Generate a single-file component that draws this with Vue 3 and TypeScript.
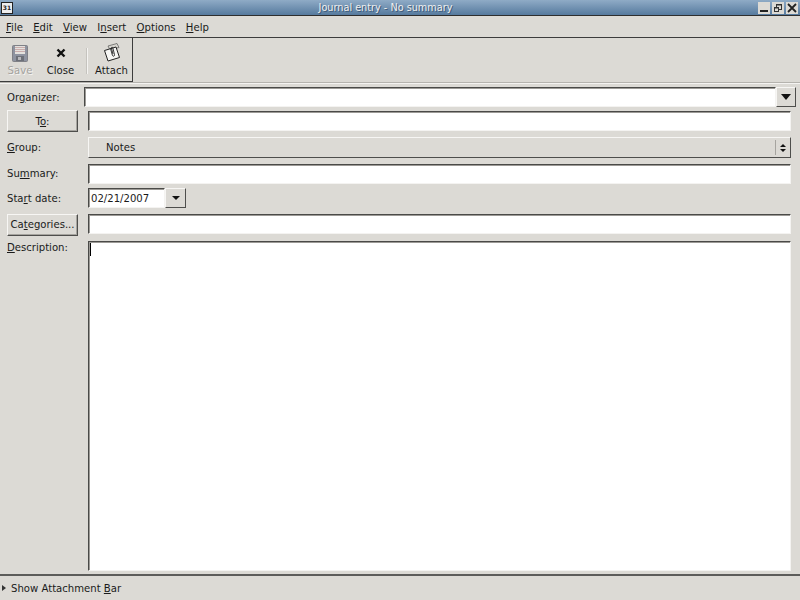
<script setup lang="ts">
const menus = [
  { before: '', key: 'F', after: 'ile' },
  { before: '', key: 'E', after: 'dit' },
  { before: '', key: 'V', after: 'iew' },
  { before: 'I', key: 'n', after: 'sert' },
  { before: '', key: 'O', after: 'ptions' },
  { before: '', key: 'H', after: 'elp' },
]
</script>

<template>
  <div class="window">
    <header class="titlebar">
      <div class="app-icon">31</div>
      <div class="title">Journal entry - No summary</div>
      <div class="win-buttons">
        <div class="win-btn">
          <svg width="12" height="12" viewBox="0 0 12 12"><rect x="2" y="8" width="8" height="2" fill="#222" /></svg>
        </div>
        <div class="win-btn">
          <svg width="12" height="12" viewBox="0 0 12 12" fill="none" stroke="#333">
            <rect x="4.5" y="2.5" width="5" height="5" />
            <path d="M4 3h6" />
            <rect x="2.5" y="5.5" width="4" height="4" fill="#dcdad5" />
            <path d="M2 6h5" />
          </svg>
        </div>
        <div class="win-btn">
          <svg width="12" height="12" viewBox="0 0 12 12" fill="none" stroke="#222" stroke-width="1.8"><path d="M2 2l8 8M10 2l-8 8" /></svg>
        </div>
      </div>
    </header>

    <nav class="menubar">
      <span v-for="m in menus" :key="m.key" class="menu">{{ m.before }}<u>{{ m.key }}</u>{{ m.after }}</span>
    </nav>

    <div class="toolbar-row">
      <div class="toolbar">
        <div class="tool disabled">
          <svg width="20" height="20" viewBox="0 -1 20 20">
            <rect x="2.500" y="1.500" width="15" height="16" rx="1" fill="#8e93a0" stroke="#808187" />
            <rect x="5" y="2" width="10" height="8" fill="#e4e2de" />
            <path d="M5 3.500h10M5 5.500h10M5 7.500h10" stroke="#c9adad" />
            <rect x="6" y="12" width="8" height="5" fill="#6d7078" />
            <rect x="8" y="13" width="3" height="3" fill="#b8b8bc" />
          </svg>
          <span class="tool-label">Save</span>
        </div>
        <div class="tool close">
          <svg width="20" height="20" viewBox="0 0 20 20" fill="none" stroke="#111" stroke-width="2.400"><path d="M6.500 6.500l7 7M13.500 6.500l-7 7" /></svg>
          <span class="tool-label">Close</span>
        </div>
        <div class="tool-sep"></div>
        <div class="tool attach">
          <svg width="20" height="20" viewBox="0 0 20 20">
            <path d="M6 3l9-2.500 2 4-9 2.500z" fill="#d8d6d0" stroke="#555" stroke-width=".7" />
            <path d="M2.500 7.500l11.500-3.500 3.500 10.500-11.500 3.500z" fill="#f6f6f4" stroke="#222" />
            <path d="M8.500 5.500l1.900 6.800c.4 1.500 2.500 1 2.100-.6L10.800 4.800c-.3-1-1.600-.6-1.400.4l1.600 5.800" fill="none" stroke="#222" stroke-width=".9" />
          </svg>
          <span class="tool-label">Attach</span>
        </div>
      </div>
    </div>

    <main class="form">
      <label class="label">Or<u>g</u>anizer:</label>
      <div class="combo">
        <div class="entry"></div>
        <div class="arrow-btn organizer-arrow"><i class="tri big"></i></div>
      </div>

      <button class="btn to-btn">T<u>o</u>:</button>
      <div class="entry field to-field"></div>

      <label class="label"><u>G</u>roup:</label>
      <div class="select">
        <span>Notes</span>
        <div class="select-arrows"><i class="tri up"></i><i class="tri"></i></div>
      </div>

      <label class="label summary-label">Su<u>m</u>mary:</label>
      <div class="entry field"></div>

      <label class="label">Sta<u>r</u>t date:</label>
      <div class="date">
        <div class="entry date-entry">02/21/2007</div>
        <div class="arrow-btn date-arrow"><i class="tri"></i></div>
      </div>

      <button class="btn cat-btn">Ca<u>t</u>egories...</button>
      <div class="entry field"></div>

      <label class="label desc-label"><u>D</u>escription:</label>
      <div class="entry description"><i class="caret"></i></div>
    </main>

    <footer class="attachbar">
      <i class="expander"></i>
      <span>Show Attachment <u>B</u>ar</span>
    </footer>
  </div>
</template>

<style scoped>
.window {
  display: flex;
  flex-direction: column;
  width: 800px;
  height: 600px;
  overflow: hidden;
  background: #dcdad5;
  color: #1a1a1a;
  font-family: "DejaVu Sans", sans-serif;
  font-size: 10.1px;
}

.titlebar {
  display: flex;
  align-items: center;
  height: 15px;
  flex: none;
  padding: 0 2px 0 1px;
  background: linear-gradient(#8fabc6, #567a9e);
  border-bottom: 1px solid #2e2e2e;
}

.app-icon {
  width: 10px;
  height: 10px;
  border: 1px solid #222;
  background: #eee;
  color: #222;
  font-size: 6px;
  font-weight: bold;
  line-height: 10px;
  text-align: center;
}

.title {
  flex: 1;
  text-align: center;
  color: #f0f0f0;
  font-size: 9.7px;
  text-shadow: 1px 1px 0 #3e5a78;
}

.win-buttons {
  display: flex;
  gap: 2px;
}

.win-btn {
  width: 12px;
  height: 12px;
  background: #dcdad5;
}

.win-btn svg {
  display: block;
}

.menubar {
  display: flex;
  align-items: center;
  gap: 10.300px;
  height: 20px;
  flex: none;
  padding: 1px 6px 0;
  border-bottom: 1px solid #3c3c3c;
}

.toolbar-row {
  height: 45px;
  flex: none;
  border-bottom: 1px solid #f4f3f1;
  box-shadow: inset 0 -1px 0 #b5b3ae;
}

.toolbar {
  display: flex;
  align-items: stretch;
  width: 133px;
  height: 44px;
  box-sizing: border-box;
  border-right: 1px solid #3c3c3c;
  border-bottom: 1px solid #3c3c3c;
  padding-left: 2px;
}

.tool {
  display: flex;
  flex: none;
  flex-direction: column;
  align-items: center;
  justify-content: flex-start;
  padding-top: 5px;
  gap: 1px;
  width: 36px;
}

.tool.close {
  width: 45px;
}

.tool.attach {
  width: 41px;
}

.tool-sep {
  flex: none;
  width: 2px;
  height: 26px;
  margin: 10px 3px 0 3px;
  background: linear-gradient(90deg, #c5c3be 50%, #f4f3f1 50%);
}

.tool.disabled {
  color: #a5a39e;
  text-shadow: 1px 1px 0 #f4f3f1;
}

.tool-label {
  line-height: 13px;
}

.form {
  flex: 1;
  min-height: 0;
  display: grid;
  grid-template-columns: 71px 1fr;
  grid-template-rows: 20px 24px 24px 21px 23px 24px 1fr;
  column-gap: 10px;
  row-gap: 3px;
  padding: 3px 9px 3px 7px;
  align-items: start;
}

.label {
  line-height: 14px;
  margin-top: 4px;
}

.summary-label {
  margin-top: 3px;
}

.desc-label {
  margin-top: 0;
}

.entry {
  box-sizing: border-box;
  background: #fff;
  border: 1px solid;
  border-color: #4a4a48 #f4f3f1 #f4f3f1 #4a4a48;
  box-shadow: inset 1px 1px 0 #9c9a96;
}

.field {
  height: 20px;
}

.to-field {
  margin-top: 1px;
}

.combo {
  display: flex;
  height: 20px;
  margin: 0 -5px 0 -4px;
}

.combo .entry {
  flex: 1;
}

.btn {
  height: 22px;
  width: 71px;
  padding: 0;
  box-sizing: border-box;
  background: #dcdad5;
  color: inherit;
  font: inherit;
  border: 1px solid;
  border-color: #f7f6f4 #4e4e4c #4e4e4c #f7f6f4;
  box-shadow: inset -1px -1px 0 #a6a49f;
}

.cat-btn {
  padding-bottom: 1px;
}

.arrow-btn {
  display: flex;
  align-items: center;
  justify-content: center;
  box-sizing: border-box;
  background: #dcdad5;
  border: 1px solid;
  border-color: #f7f6f4 #4e4e4c #4e4e4c #f7f6f4;
}

.organizer-arrow {
  width: 20px;
}

.tri {
  display: block;
  width: 0;
  height: 0;
  border-left: 4px solid transparent;
  border-right: 4px solid transparent;
  border-top: 4px solid #111;
}

.tri.big {
  border-left-width: 5px;
  border-right-width: 5px;
  border-top-width: 6px;
}

.tri.up {
  border-top: 0;
  border-bottom: 4px solid #111;
}

.select {
  display: flex;
  align-items: center;
  justify-content: space-between;
  height: 21px;
  box-sizing: border-box;
  padding-left: 17px;
  border: 1px solid;
  border-color: #f7f6f4 #4e4e4c #4e4e4c #f7f6f4;
}

.select-arrows {
  display: flex;
  flex-direction: column;
  align-items: center;
  justify-content: center;
  gap: 2px;
  width: 14px;
  height: 15px;
  border-left: 1px solid #a6a49f;
}

.select-arrows .tri {
  border-left-width: 3px;
  border-right-width: 3px;
  border-top-width: 3px;
}

.select-arrows .tri.up {
  border-bottom-width: 3px;
  border-top-width: 0;
}

.date {
  display: flex;
  height: 20px;
}

.date-entry {
  width: 77px;
  padding-left: 2px;
  line-height: 20px;
}

.date-arrow {
  width: 21px;
}

.description {
  align-self: stretch;
  position: relative;
}

.caret {
  position: absolute;
  left: 1px;
  top: 1px;
  width: 1px;
  height: 13px;
  background: #000;
}

.attachbar {
  display: flex;
  align-items: center;
  gap: 5px;
  height: 24px;
  flex: none;
  padding-left: 2px;
  border-top: 2px solid #5c5c5a;
}

.expander {
  display: block;
  width: 0;
  height: 0;
  border-top: 3px solid transparent;
  border-bottom: 3px solid transparent;
  border-left: 4px solid #333;
}
</style>

<style>
html, body {
  margin: 0;
  background: #dcdad5;
}
</style>
